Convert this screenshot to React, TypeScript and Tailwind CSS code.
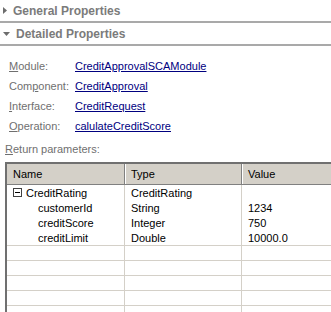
import React from "react"

const font = { fontFamily: '"Liberation Sans", Arial, sans-serif' }

const fields = [
  { key: "M", rest: "odule:", value: "CreditApprovalSCAModule" },
  { key: "", pre: "Com", u: "p", rest: "onent:", value: "CreditApproval" },
  { key: "I", rest: "nterface:", value: "CreditRequest" },
  { key: "O", rest: "peration:", value: "calulateCreditScore" },
]

const rows = [
  { name: "CreditRating", type: "CreditRating", value: "", root: true },
  { name: "customerId", type: "String", value: "1234" },
  { name: "creditScore", type: "Integer", value: "750" },
  { name: "creditLimit", type: "Double", value: "10000.0" },
]

function SectionHeader({ title, open }: { title: string; open: boolean }) {
  return (
    <div className="border-b-2 border-[#a9a9a9]">
      <div className="flex h-[21px] items-center gap-[6px] pl-[3px]">
        {open ? (
          <svg width="7" height="4" viewBox="0 0 7 4">
            <path d="M0 0h7L3.5 4z" fill="#6d6d6d" />
          </svg>
        ) : (
          <svg width="4" height="7" viewBox="0 0 4 7">
            <path d="M0 0v7l4-3.5z" fill="#6d6d6d" />
          </svg>
        )}
        <span className="text-[12px] font-bold text-[#7b7b7b]">{title}</span>
      </div>
    </div>
  )
}

export default function App() {
  return (
    <div className="h-[312px] w-[331px] overflow-hidden bg-white text-[11px] leading-[14px] text-black" style={font}>
      <SectionHeader title="General Properties" open={false} />
      <SectionHeader title="Detailed Properties" open={true} />

      <div className="flex flex-col gap-[6px] pl-[9px] pt-[13px]">
        {fields.map((f) => (
          <div key={f.value} className="flex h-[14px] items-center">
            <span className="w-[66px] text-[#6f6f6f]">
              {f.pre ? (
                <>
                  {f.pre}
                  <span className="underline">{f.u}</span>
                  {f.rest}
                </>
              ) : (
                <>
                  <span className="underline">{f.key}</span>
                  {f.rest}
                </>
              )}
            </span>
            <span className="text-[#00007f] underline">{f.value}</span>
          </div>
        ))}
      </div>

      <div className="mt-[9px] h-[14px] pl-[5px] text-[#6f6f6f]">
        <span className="underline">R</span>eturn parameters:
      </div>

      <div className="ml-[5px] mt-[6px] w-[340px] border-l-2 border-t-2 border-l-[#707070] border-t-[#707070] bg-white">
        <div className="flex h-[21px] border-b border-[#808080] bg-[#d4d0c8]">
          <div className="flex w-[118px] items-center border-r border-[#808080] pl-[6px]">Name</div>
          <div className="flex w-[117px] items-center border-l border-r border-l-white border-r-[#808080] pl-[5px]">Type</div>
          <div className="flex flex-1 items-center border-l border-l-white pl-[5px]">Value</div>
        </div>
        {rows.map((r) => (
          <div key={r.name} className="flex h-[15px]">
            <div className="flex w-[118px] items-center border-r border-[#d4d0c8]">
              {r.root ? (
                <div className="flex items-center pl-[6px]">
                  <svg width="9" height="9" viewBox="0 0 9 9">
                    <rect x="0.5" y="0.5" width="8" height="8" fill="white" stroke="#404040" />
                    <path d="M2 4.5h5" stroke="#000" />
                  </svg>
                  <span className="pl-[4px]">{r.name}</span>
                </div>
              ) : (
                <span className="pl-[31px]">{r.name}</span>
              )}
            </div>
            <div className="flex w-[117px] items-center border-r border-[#d4d0c8] pl-[6px]">{r.type}</div>
            <div className="flex flex-1 items-center pl-[6px]">{r.value}</div>
          </div>
        ))}
        {Array.from({ length: 5 }).map((_, i) => (
          <div key={i} className="flex h-[15px] border-t border-[#d4d0c8]">
            <div className="w-[118px] border-r border-[#d4d0c8]" />
            <div className="w-[117px] border-r border-[#d4d0c8]" />
            <div className="flex-1" />
          </div>
        ))}
      </div>
    </div>
  )
}
